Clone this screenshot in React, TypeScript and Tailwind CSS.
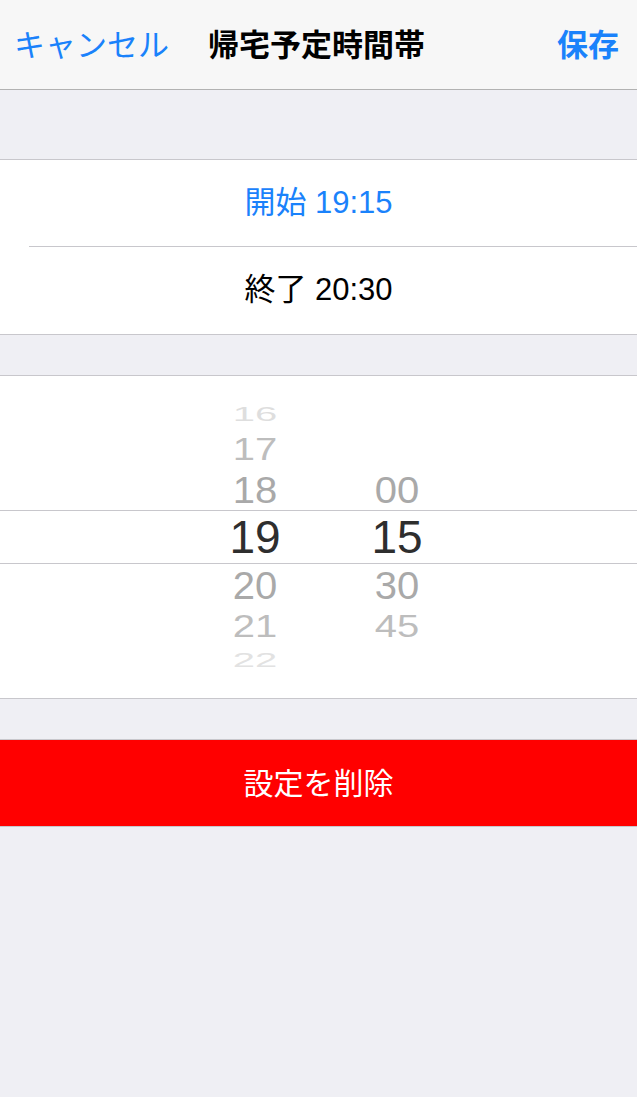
import React from "react";

const FONT = "font-['Liberation_Sans','Noto_Sans_CJK_JP',sans-serif]";

type Slot = {
  h: string;
  hour: string;
  minute?: string;
  cls: string;
};

// wheel slots, top to bottom; the middle one is the selected row
const SLOTS: Slot[] = [
  { h: "h-[32px]", hour: "16", cls: "text-[40px] scale-y-[0.52] text-[#dedede]" },
  { h: "h-[37px]", hour: "17", cls: "text-[40px] scale-y-[0.77] text-[#bdbdbd]" },
  { h: "h-[45px]", hour: "18", minute: "00", cls: "text-[40px] scale-y-[0.94] text-[#a9a9a9]" },
  { h: "h-[50px]", hour: "19", minute: "15", cls: "text-[46px] text-[#2e2e2e]" },
  { h: "h-[45px]", hour: "20", minute: "30", cls: "text-[40px] scale-y-[0.97] text-[#a9a9a9]" },
  { h: "h-[37px]", hour: "21", minute: "45", cls: "text-[40px] scale-y-[0.8] text-[#bdbdbd]" },
  { h: "h-[32px]", hour: "22", cls: "text-[40px] scale-y-[0.49] text-[#e2e2e2]" },
];

function WheelColumn({ pick }: { pick: (s: Slot) => string | undefined }) {
  return (
    <div className="flex w-[100px] flex-col">
      {SLOTS.map((s, i) => (
        <div key={i} className={`${s.h} flex items-center justify-center overflow-hidden`}>
          <span className={`${s.cls} leading-none`}>{pick(s) ?? ""}</span>
        </div>
      ))}
    </div>
  );
}

export default function App() {
  return (
    <div className={`${FONT} min-h-[1097px] w-full bg-[#efeff4]`}>
      {/* nav bar */}
      <header className="grid h-[90px] grid-cols-[1fr_auto_1fr] items-center border-b border-[#b2b2b2] bg-[#f7f7f7] pl-[14px] pr-[18px] pt-[4px]">
        <span className="justify-self-start text-[31px] text-[#1a82fb]">キャンセル</span>
        <span className="text-[31px] font-bold text-black">帰宅予定時間帯</span>
        <span className="justify-self-end text-[31px] font-bold text-[#1a82fb]">保存</span>
      </header>

      <div className="h-[69px]" />

      {/* start / end rows */}
      <section className="border-y border-[#c8c7cc] bg-white">
        <div className="flex h-[86px] items-center justify-center text-[31px] text-[#1a82fb]">
          開始 19:15
        </div>
        <div className="ml-[29px] h-px bg-[#c8c7cc]" />
        <div className="flex h-[87px] items-center justify-center text-[31px] text-black">
          終了 20:30
        </div>
      </section>

      <div className="h-[40px]" />

      {/* time picker */}
      <section className="relative h-[324px] border-y border-[#c8c7cc] bg-white">
        <div className="flex gap-[42px] pl-[205px] pt-[22px]">
          <WheelColumn pick={(s) => s.hour} />
          <WheelColumn pick={(s) => s.minute} />
        </div>
        <div className="absolute left-0 right-0 top-[134px] h-px bg-[#c8c7cc]" />
        <div className="absolute left-0 right-0 top-[187px] h-px bg-[#c8c7cc]" />
      </section>

      <div className="h-[40px]" />

      {/* delete */}
      <button className="flex h-[88px] w-full items-center justify-center border-y border-[#c8c7cc] bg-[#ff0000] text-[30px] text-white">
        設定を削除
      </button>
    </div>
  );
}
